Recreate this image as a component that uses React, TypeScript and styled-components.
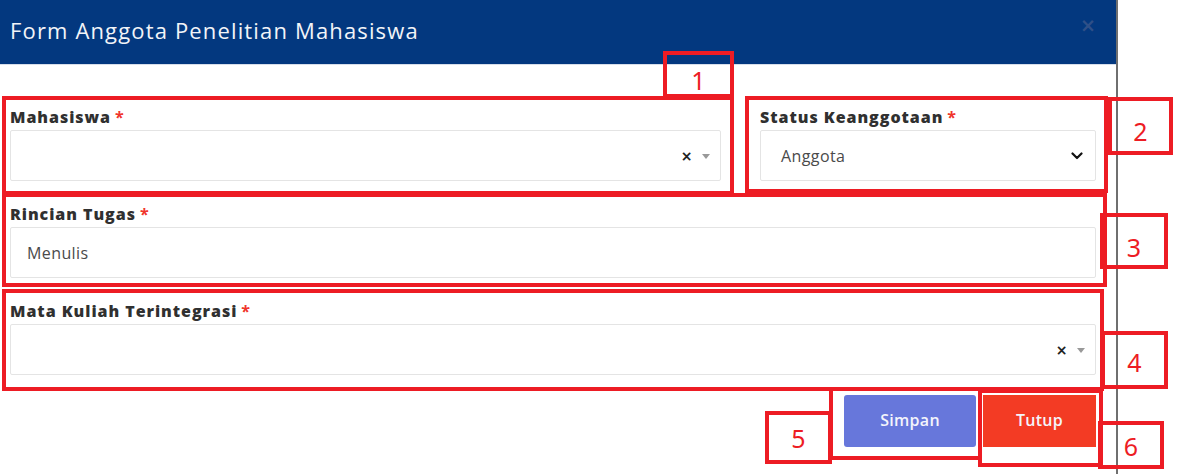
import React from "react";
import styled, { createGlobalStyle } from "styled-components";

const Global = createGlobalStyle`
  html, body { margin: 0; padding: 0; background: #ffffff; }
  body { font-family: "Open Sans", "Noto Sans", sans-serif; }
  * { box-sizing: border-box; }
`;

const Page = styled.div`
  position: relative;
  width: 1183px;
  height: 474px;
  overflow: hidden;
  background: #ffffff;
`;

const Modal = styled.div`
  width: 1118px;
  height: 474px;
  border-right: 2px solid #6f6f6f;
  background: #ffffff;
`;

const Header = styled.div`
  height: 65px;
  background: #03387f;
  border-bottom: 1px solid #d7deea;
  display: flex;
  align-items: center;
  justify-content: space-between;
  padding: 0 20px 4px 10px;
`;

const Title = styled.h5`
  margin: 0;
  font-family: "Open Sans", sans-serif;
  font-weight: 400;
  font-size: 22px;
  letter-spacing: 1.15px;
  color: #f2f4f8;
`;

const Close = styled.span`
  font-family: "DejaVu Sans", sans-serif;
  font-weight: 700;
  font-size: 19px;
  line-height: 1;
  color: #2f5088;
  margin-top: -10px;
`;

const Body = styled.div`
  padding: 42px 20px 0 10px;
`;

const Row = styled.div<{ $cols?: string }>`
  display: grid;
  grid-template-columns: ${(p) => p.$cols ?? "1fr"};
  column-gap: 39px;
`;

const Group = styled.div`
  margin-bottom: 23px;
`;

const Label = styled.label`
  display: block;
  height: 20px;
  line-height: 20px;
  margin-bottom: 3px;
  font-family: "Open Sans", sans-serif;
  font-weight: 800;
  font-size: 16px;
  letter-spacing: 0.95px;
  color: #303030;
`;

const Req = styled.span`
  color: #f0352b;
  margin-left: 4px;
  font-weight: 700;
`;

const Field = styled.div<{ $pl?: number; $pr?: number }>`
  height: 51px;
  border: 1px solid #e4e4e4;
  border-radius: 2px;
  background: #ffffff;
  display: flex;
  align-items: center;
  padding: 0 ${(p) => p.$pr ?? 16}px 0 ${(p) => p.$pl ?? 16}px;
  font-family: "Open Sans", sans-serif;
  font-size: 16px;
  letter-spacing: 0.4px;
  color: #4a4a4a;
`;

const FieldText = styled.span<{ $indent?: number }>`
  flex: 1;
  padding-left: ${(p) => p.$indent ?? 0}px;
`;

const ClearX = styled.span`
  font-family: "DejaVu Sans", sans-serif;
  font-weight: 700;
  font-size: 14px;
  color: #222;
  margin-right: 9px;
`;

const Caret = styled.span`
  width: 0;
  height: 0;
  border-left: 4px solid transparent;
  border-right: 4px solid transparent;
  border-top: 5px solid #999;
  margin-top: 1px;
`;

const Footer = styled.div`
  display: flex;
  justify-content: flex-end;
  gap: 7px;
  margin-top: -3px;
`;

const Button = styled.button<{ $bg: string; $w: number; $radius?: number }>`
  width: ${(p) => p.$w}px;
  height: 52px;
  border: none;
  border-radius: ${(p) => p.$radius ?? 3}px;
  background: ${(p) => p.$bg};
  color: #f4f4fb;
  font-family: "Open Sans", sans-serif;
  font-weight: 600;
  font-size: 16px;
  letter-spacing: 0.3px;
  padding: 0;
  padding-bottom: 2px;
`;

const Anno = styled.div<{ $x: number; $y: number; $w: number; $h: number }>`
  position: absolute;
  left: ${(p) => p.$x}px;
  top: ${(p) => p.$y}px;
  width: ${(p) => p.$w}px;
  height: ${(p) => p.$h}px;
  border: 4px solid #ed1c24;
  display: flex;
  align-items: center;
  justify-content: center;
  pointer-events: none;
`;

const AnnoNum = styled.span<{ $dy?: number; $dx?: number }>`
  font-family: "Noto Sans", "Open Sans", sans-serif;
  font-size: 25px;
  line-height: 1;
  color: #ed1c24;
  transform: translate(${(p) => p.$dx ?? 0}px, ${(p) => p.$dy ?? 0}px);
`;

const Chevron = () => (
  <svg width="12" height="8" viewBox="0 0 12 8">
    <path d="M1.5 1.5 L6 6 L10.5 1.5" fill="none" stroke="#111" strokeWidth="2.2" strokeLinecap="round" strokeLinejoin="round" />
  </svg>
);

export default function App() {
  return (
    <>
      <Global />
      <Page>
        <Modal>
          <Header>
            <Title>Form Anggota Penelitian Mahasiswa</Title>
            <Close>×</Close>
          </Header>
          <Body>
            <Row $cols="711px 336px">
              <Group>
                <Label>Mahasiswa<Req>*</Req></Label>
                <Field $pr={10}>
                  <FieldText />
                  <ClearX>×</ClearX>
                  <Caret />
                </Field>
              </Group>
              <Group>
                <Label>Status Keanggotaan<Req>*</Req></Label>
                <Field $pl={12} $pr={12}>
                  <FieldText $indent={8}>Anggota</FieldText>
                  <Chevron />
                </Field>
              </Group>
            </Row>
            <Group>
              <Label>Rincian Tugas<Req>*</Req></Label>
              <Field>
                <FieldText>Menulis</FieldText>
              </Field>
            </Group>
            <Group>
              <Label>Mata Kuliah Terintegrasi<Req>*</Req></Label>
              <Field $pr={10}>
                <FieldText />
                <ClearX>×</ClearX>
                <Caret />
              </Field>
            </Group>
            <Footer>
              <Button $bg="#6777db" $w={132}>Simpan</Button>
              <Button $bg="#f33b24" $w={113} $radius={0}>Tutup</Button>
            </Footer>
          </Body>
        </Modal>

        <Anno $x={663} $y={51} $w={71} $h={47}><AnnoNum $dy={6}>1</AnnoNum></Anno>
        <Anno $x={2} $y={96} $w={732} $h={99} />
        <Anno $x={745} $y={96} $w={363} $h={97} />
        <Anno $x={1108} $y={97} $w={65} $h={58}><AnnoNum $dy={5}>2</AnnoNum></Anno>
        <Anno $x={2} $y={193} $w={1105} $h={94} />
        <Anno $x={1100} $y={213} $w={68} $h={56}><AnnoNum $dy={6}>3</AnnoNum></Anno>
        <Anno $x={2} $y={289} $w={1102} $h={102} />
        <Anno $x={1101} $y={331} $w={67} $h={58}><AnnoNum $dy={2}>4</AnnoNum></Anno>
        <Anno $x={829} $y={387} $w={153} $h={73} />
        <Anno $x={978} $y={389} $w={125} $h={78} />
        <Anno $x={765} $y={411} $w={67} $h={53}><AnnoNum $dy={1}>5</AnnoNum></Anno>
        <Anno $x={1098} $y={421} $w={66} $h={48}><AnnoNum $dy={1}>6</AnnoNum></Anno>
      </Page>
    </>
  );
}
